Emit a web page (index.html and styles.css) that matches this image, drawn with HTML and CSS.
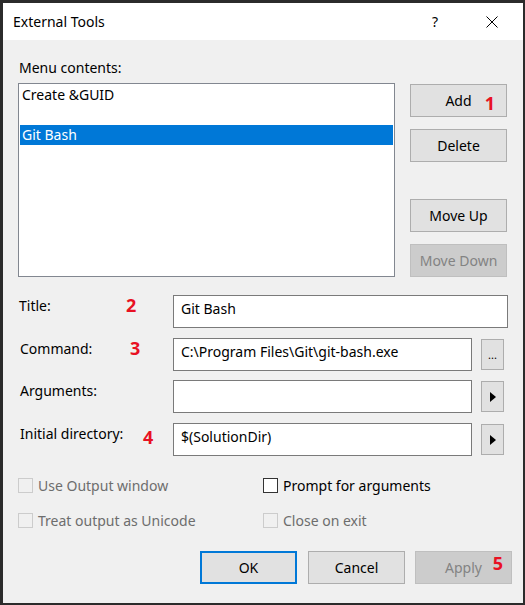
FILE: index.html
```html
<!DOCTYPE html>
<html>
<head>
<meta charset="utf-8">
<link rel="stylesheet" href="styles.css">
</head>
<body>
<div class="window">
  <div class="titlebar">
    <span class="title">External Tools</span>
    <span class="help">?</span>
    <span class="close"><svg width="12" height="12" viewBox="0 0 12 12"><path d="M0.5 0.5 L11.5 11.5 M11.5 0.5 L0.5 11.5" stroke="#000" stroke-width="1" fill="none"/></svg></span>
  </div>
  <div class="content">
    <div class="menu-label">Menu contents:</div>
    <div class="list-row">
      <div class="listbox">
        <div class="item">Create &amp;GUID</div>
        <div class="item"></div>
        <div class="item selected">Git Bash</div>
      </div>
      <div class="side-buttons">
        <button class="btn add">Add<span class="mark mark-1">1</span></button>
        <button class="btn delete">Delete</button>
        <button class="btn moveup">Move Up</button>
        <button class="btn movedown disabled">Move Down</button>
      </div>
    </div>
    <div class="form">
      <div class="field-row">
        <div class="field-label">Title:<span class="mark mark-2">2</span></div>
        <div class="input wide">Git Bash</div>
      </div>
      <div class="field-row">
        <div class="field-label shift">Command:<span class="mark mark-3">3</span></div>
        <div class="input">C:\Program Files\Git\git-bash.exe</div>
        <button class="pick dots">...</button>
      </div>
      <div class="field-row">
        <div class="field-label shift">Arguments:</div>
        <div class="input"></div>
        <button class="pick"><svg width="6" height="10" viewBox="0 0 6 10"><polygon points="0,0 6,5 0,10" fill="#000"/></svg></button>
      </div>
      <div class="field-row">
        <div class="field-label shift">Initial directory:<span class="mark mark-4">4</span></div>
        <div class="input">$(SolutionDir)</div>
        <button class="pick"><svg width="6" height="10" viewBox="0 0 6 10"><polygon points="0,0 6,5 0,10" fill="#000"/></svg></button>
      </div>
    </div>
    <div class="checks">
      <label class="check disabled"><span class="box"></span>Use Output window</label>
      <label class="check"><span class="box"></span>Prompt for arguments</label>
      <label class="check disabled"><span class="box"></span>Treat output as Unicode</label>
      <label class="check disabled"><span class="box"></span>Close on exit</label>
    </div>
    <div class="footer">
      <button class="btn ok">OK</button>
      <button class="btn cancel">Cancel</button>
      <button class="btn apply disabled">Apply<span class="mark mark-5">5</span></button>
    </div>
  </div>
</div>
</body>
</html>
```

FILE: styles.css
```css
html, body {
  margin: 0;
  padding: 0;
}
body {
  background: #2b2b2b;
  font-family: "Noto Sans", "Open Sans", sans-serif;
  font-size: 14px;
  line-height: 20px;
  color: #000;
  height: 605px;
  overflow: hidden;
}
.window {
  margin: 3px 0 0 3px;
  width: 520px;
  height: 600px;
  background: #f0f0f0;
  display: flex;
  flex-direction: column;
}
.titlebar {
  height: 37px;
  background: #fff;
  display: flex;
  align-items: center;
  padding-left: 10px;
  box-sizing: border-box;
}
.title {
  flex: 1;
}
.help {
  margin-right: 48px;
}
.close {
  width: 12px;
  height: 12px;
  margin-right: 25px;
  display: flex;
}
.content {
  padding: 0 11px 0 15px;
}
.menu-label {
  margin-top: 18px;
  padding-left: 1px;
}
.list-row {
  display: flex;
  margin-top: 5px;
}
.listbox {
  width: 377px;
  height: 194px;
  box-sizing: border-box;
  border: 1px solid #828790;
  background: #fff;
  padding: 1px;
}
.item {
  height: 20px;
  padding-left: 2px;
  line-height: 20px;
}
.item.selected {
  background: #0078d7;
  color: #fff;
}
.side-buttons {
  margin-left: 15px;
  display: flex;
  flex-direction: column;
}
.btn {
  position: relative;
  width: 97px;
  height: 33px;
  box-sizing: border-box;
  border: 1px solid #adadad;
  background: #e1e1e1;
  font-family: inherit;
  font-size: 14px;
  line-height: 20px;
  color: #000;
  padding: 0;
  margin: 0;
}
.btn.disabled {
  background: #cccccc;
  border-color: #bfbfbf;
  color: #838383;
}
.add { margin-top: 1px; }
.delete { margin-top: 12px; }
.moveup { margin-top: 37px; }
.movedown { margin-top: 12px; }
.mark {
  position: absolute;
  color: #e81123;
  font-weight: bold;
  font-size: 18px;
  line-height: 18px;
}
.mark-1 { right: 11px; top: 9px; }
.mark-2 { left: 108px; top: 1px; }
.mark-3 { left: 112px; top: 1px; }
.mark-4 { left: 125px; top: 5px; }
.mark-5 { right: 8px; top: 2px; }
.form {
  margin-top: 18px;
  display: flex;
  flex-direction: column;
  gap: 10px;
}
.field-row {
  display: flex;
  align-items: flex-start;
  height: 33px;
}
.field-row:nth-child(3) { margin-top: -1px; }
.field-label {
  position: relative;
  width: 155px;
  flex-shrink: 0;
  box-sizing: border-box;
  padding-left: 1px;
  padding-top: 1px;
  height: 33px;
}
.field-label.shift { padding-left: 2px; }
.input {
  width: 299px;
  height: 33px;
  box-sizing: border-box;
  border: 1px solid #7a7a7a;
  background: #fff;
  padding: 3px 0 0 7px;
  white-space: nowrap;
}
.input.wide { width: 335px; }
.pick {
  width: 23px;
  height: 31px;
  margin: 1px 0 0 9px;
  box-sizing: border-box;
  border: 1px solid #adadad;
  background: #e1e1e1;
  padding: 0;
  display: flex;
  align-items: center;
  justify-content: center;
  font-family: inherit;
  color: #000;
}
.pick svg { margin-left: 1px; }
.pick.dots {
  font-size: 11px;
  line-height: 11px;
  align-items: flex-end;
  padding-bottom: 9px;
}
.checks {
  margin-top: 22px;
  display: grid;
  grid-template-columns: 245px 1fr;
  row-gap: 20px;
}
.check {
  display: flex;
  align-items: center;
  height: 15px;
  white-space: nowrap;
}
.box {
  width: 15px;
  height: 15px;
  box-sizing: border-box;
  border: 1px solid #333;
  background: #fff;
  margin-right: 5px;
  flex-shrink: 0;
}
.check.disabled { color: #6d6d6d; }
.check.disabled .box {
  border-color: #cccccc;
  background: #f0f0f0;
}
.footer {
  margin-top: 23px;
  display: flex;
  justify-content: flex-end;
}
.ok {
  border: 2px solid #0078d7;
  margin-right: 11px;
}
.cancel { margin-right: 10px; }
```
